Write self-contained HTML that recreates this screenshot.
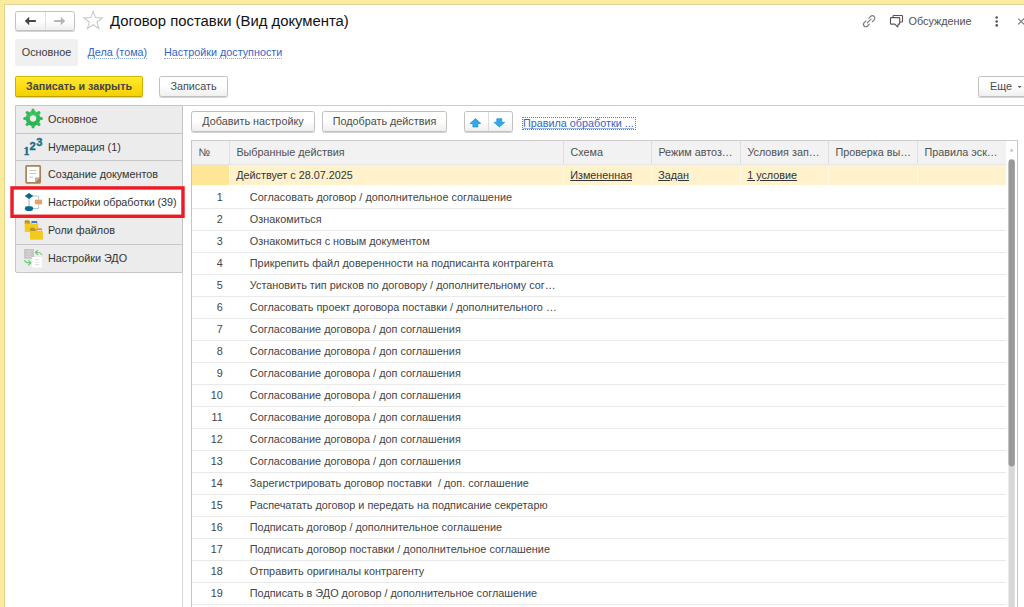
<!DOCTYPE html>
<html lang="ru">
<head>
<meta charset="utf-8">
<title>Договор поставки (Вид документа)</title>
<style>
*{box-sizing:border-box;margin:0;padding:0}
html,body{width:1024px;height:607px;overflow:hidden;background:#fff}
body{font-family:"Liberation Sans",sans-serif;font-size:10.8px;color:#333;position:relative}
.abs{position:absolute}
#ytop{left:0;top:0;width:1024px;height:4px;background:#fbeb9d}
#ytop2{left:0;top:4px;width:1024px;height:1px;background:#dcd39e}
#yleft2{left:4px;top:4px;width:1px;height:603px;background:#e2d68c}
#yleft{left:0;top:0;width:4px;height:607px;background:#fbeb9d}
.btn{position:absolute;border:1px solid #c0c0c0;border-radius:2.5px;background:linear-gradient(#fff 45%,#efefef);box-shadow:0 1px 0 rgba(0,0,0,.17);color:#4a4a4a;font-size:10.8px;text-align:center;white-space:nowrap}
#title{left:110px;top:11px;font-size:14.85px;line-height:20px;color:#111;white-space:nowrap}
.tabsel{left:15px;top:39px;width:63px;height:27px;background:#f0f0f0;border-radius:2px;text-align:center;line-height:27px;color:#3a3a3a}
.tlink{top:39px;height:27px;line-height:27px;color:#3465c4;white-space:nowrap}
.tlink span{border-bottom:1px dotted #86a6dd}
#btnsave{left:15px;top:76px;width:128px;height:21px;line-height:19px;font-weight:bold;font-size:10.7px;color:#444;background:linear-gradient(#ffe92e,#f5d000);border-color:#d4b800 #cdb000 #bfa200;border-radius:2px}
#btnwrite{left:159px;top:76px;width:69px;height:21px;line-height:19px}
#btnmore{left:978px;top:76px;width:60px;height:21px;line-height:19px;text-align:left;padding-left:11px}
/* left panel */
#lp{left:15px;top:105px;width:168px;height:168px;background:#ececec;border:1px solid #c6c6c6;border-radius:0 0 0 2px}
.li{position:absolute;left:0;width:166px;line-height:27px;padding-left:32px;color:#333;border-bottom:1px solid #c6c6c6;white-space:nowrap}
#sel{left:10.25px;top:186.6px;width:174.4px;height:31.5px;border:3.45px solid #ed1c24;background:#fff}
/* right */
#topline{left:183px;top:105px;width:841px;height:1px;background:#cdcdcd}
#vline{left:182px;top:273px;width:1px;height:334px;background:#d6d6d6}
#tbl{left:191px;top:140px;width:827px;height:480px;border:1px solid #c4c4c4;border-top-color:#cdcdcd;background:#fff}
.th{position:absolute;top:0;height:24px;line-height:22px;background:#f2f2f2;border-right:1px solid #dedede;border-bottom:1px solid #e6e6e6;padding-left:6.4px;color:#505050;white-space:nowrap;overflow:hidden}
.yc{position:absolute;top:24px;height:20px;line-height:20px;background:#fff2cc;border-right:1px solid #fff8e4;padding-left:6.2px;color:#333;white-space:nowrap}
.yc u{text-decoration:underline;text-underline-offset:1px}
.row{position:absolute;left:0;width:814px;height:22px;border-bottom:1px solid #e9e9e9;line-height:21px;white-space:nowrap;color:#444}
.row i{position:absolute;left:0;width:30.7px;text-align:right;font-style:normal}
.row b{position:absolute;left:57.8px;font-weight:normal;font-size:10.86px}
</style>
</head>
<body>
<div class="abs" id="ytop"></div>
<div class="abs" id="ytop2"></div>
<div class="abs" id="yleft"></div>
<div class="abs" id="yleft2"></div>

<!-- nav buttons -->
<div class="btn" style="left:15px;top:11px;width:60px;height:20px"></div>
<div class="abs" style="left:45px;top:12px;width:1px;height:18px;background:#e0e0e0"></div>
<svg class="abs" style="left:15px;top:11px" width="60" height="20" viewBox="0 0 60 20">
  <path d="M9.8 10 L14.2 5.8 V8.9 H20.8 V11.1 H14.2 V14.2 Z" fill="#444"/>
  <path d="M50.2 10 L45.8 5.8 V8.9 H39.2 V11.1 H45.8 V14.2 Z" fill="#b4b4b4"/>
</svg>
<!-- star -->
<svg class="abs" style="left:81.9px;top:9.3px" width="22.3" height="22.3" viewBox="0 0 21 21">
  <path d="M10.5 2.2 L12.7 8.1 L19.2 8.4 L14.1 12.3 L15.9 18.4 L10.5 14.8 L5.1 18.4 L6.9 12.3 L1.8 8.4 L8.3 8.1 Z" fill="#fff" stroke="#c2c5ca" stroke-width=".95" stroke-linejoin="miter"/>
</svg>
<div class="abs" id="title">Договор поставки (Вид документа)</div>

<!-- top right icons -->
<svg class="abs" style="left:861px;top:13px" width="16" height="16" viewBox="0 0 16 16" fill="none" stroke="#7a7a7a" stroke-width="1.15" stroke-linecap="round">
  <path d="M6.3 9.9 L10 6.2"/>
  <path d="M7.9 5.2 L9.7 3.4 a2.4 2.4 0 0 1 3.4 3.4 L11.3 8.6"/>
  <path d="M8.4 11.2 L6.6 13 a2.4 2.4 0 0 1 -3.4 -3.4 L5 7.8"/>
</svg>
<svg class="abs" style="left:888px;top:13px" width="17" height="16" viewBox="0 0 17 16" fill="none" stroke="#555" stroke-width="1.1" stroke-linejoin="round">
  <path d="M5 4 V3.2 a.7 .7 0 0 1 .7 -.7 H13.8 a.7 .7 0 0 1 .7 .7 V8.3 a.7 .7 0 0 1 -.7 .7 H12"/>
  <path d="M3.2 4.6 H11 a.7 .7 0 0 1 .7 .7 V10.4 a.7 .7 0 0 1 -.7 .7 H10.2 L9.8 14 L6.8 11.1 H3.2 a.7 .7 0 0 1 -.7 -.7 V5.3 a.7 .7 0 0 1 .7 -.7 Z" fill="#fff"/>
</svg>
<div class="abs" style="left:908.6px;top:14px;line-height:14px;color:#505050;white-space:nowrap">Обсуждение</div>
<svg class="abs" style="left:994px;top:15px" width="6" height="14" viewBox="0 0 6 14"><circle cx="2.7" cy="2.5" r="1.3" fill="#555"/><circle cx="2.7" cy="6.5" r="1.3" fill="#555"/><circle cx="2.7" cy="10.4" r="1.3" fill="#555"/></svg>
<svg class="abs" style="left:1016px;top:16px" width="8" height="10" viewBox="0 0 8 10"><path d="M2.2 2.6 L8 8.4 M8 2.6 L2.2 8.4" stroke="#777" stroke-width="1.1" fill="none"/></svg>

<!-- tabs -->
<div class="abs tabsel">Основное</div>
<div class="abs tlink" style="left:87.5px"><span>Дела (тома)</span></div>
<div class="abs tlink" style="left:164px"><span>Настройки доступности</span></div>

<!-- command bar -->
<div class="btn" id="btnsave">Записать и закрыть</div>
<div class="btn" id="btnwrite">Записать</div>
<div class="btn" id="btnmore">Еще</div>
<svg class="abs" style="left:1017px;top:85px" width="6" height="4" viewBox="0 0 6 4"><path d="M.6 .9 H4.6 L2.6 3.1 Z" fill="#555"/></svg>

<!-- left panel -->
<div class="abs" id="lp">
  <div class="li" style="top:0;height:28px">Основное</div>
  <div class="li" style="top:28px;height:27px">Нумерация (1)</div>
  <div class="li" style="top:55px;height:28px">Создание документов</div>
  <div class="li" style="top:83px;height:28px"></div>
  <div class="li" style="top:111px;height:28px">Роли файлов</div>
  <div class="li" style="top:139px;height:27px;border-bottom:none">Настройки ЭДО</div>
</div>
<svg class="abs" style="left:10px;top:186px" width="176" height="33" viewBox="0 0 176 33"><rect x="2.03" y="1.93" width="170.95" height="28.35" fill="#fff" stroke="#ed1c24" stroke-width="3.45"/></svg>
<div class="abs" style="left:48px;top:189px;line-height:27px;white-space:nowrap;color:#333;letter-spacing:-0.06px">Настройки обработки (39)</div>

<!-- ICONS -->
<!-- gear -->
<svg class="abs" style="left:22px;top:107px" width="22" height="23" viewBox="0 0 22 23">
  <defs><linearGradient id="gg" x1="0" y1="0" x2="0" y2="1"><stop offset="0" stop-color="#45c367"/><stop offset="1" stop-color="#22b14c"/></linearGradient></defs>
  <g transform="translate(11.05 11.5)" stroke="url(#gg)" stroke-width="3.2" stroke-linecap="round">
    <circle r="5.3" fill="none" stroke-width="4.3"/>
    <path d="M0 -6.5V-8.3 M0 6.5V8.3 M-6.5 0H-8.3 M6.5 0H8.3 M-4.6 -4.6L-5.87 -5.87 M4.6 4.6L5.87 5.87 M-4.6 4.6L-5.87 5.87 M4.6 -4.6L5.87 -5.87" stroke="#33ba59"/>
  </g>
</svg>
<!-- 123 -->
<svg class="abs" style="left:22px;top:135px" width="24" height="24" viewBox="0 0 24 24" font-family="'Liberation Serif',serif" font-weight="bold" fill="#156e8f" stroke="#156e8f" stroke-width=".35">
  <text x="1.4" y="20.3" font-size="12">1</text>
  <text x="7.5" y="15.3" font-size="11.2" font-family="'Liberation Sans',sans-serif">2</text>
  <text x="14.3" y="10.6" font-size="11.2" font-family="'Liberation Sans',sans-serif">3</text>
</svg>
<!-- doc -->
<svg class="abs" style="left:24px;top:164px" width="19" height="21" viewBox="0 0 19 21">
  <rect x="2.1" y="1.9" width="14.1" height="16.9" rx=".7" fill="#fff" stroke="#aa8253" stroke-width="1.7"/>
  <path d="M5.3 6.5H12.5 M5.3 9.6H12.5 M5.3 13.1H9" stroke="#c6c6c6" stroke-width="1"/>
  <path d="M11 18 L16 13 V18 Z" fill="#aa8253"/>
  <path d="M11 13.4 H15.2 L11 17.6 Z" fill="#a9aeb3"/>
</svg>
<!-- process -->
<svg class="abs" style="left:23px;top:191px" width="21" height="22" viewBox="0 0 21 22">
  <path d="M6 5 H15.7 V8.5 M15.7 13.3 V17.5 H6" fill="none" stroke="#a9ccd2" stroke-width="1"/>
  <path d="M6 5 V17" stroke="#b7d5da" stroke-width="1.6"/>
  <path d="M1.7 5 L6 2 L10.3 5 L6 8 Z" fill="#0b6a8c"/>
  <rect x="1.8" y="15.2" width="8.4" height="4.8" rx="2.4" fill="#0b6a8c"/>
  <rect x="11.8" y="8.6" width="7.2" height="4.7" fill="#e9a263"/>
</svg>
<!-- folders -->
<svg class="abs" style="left:24px;top:219px" width="20" height="22" viewBox="0 0 20 22">
  <rect x="7.5" y="2" width="5.7" height="3.6" rx=".6" fill="#3b7ad6"/><rect x="8.2" y="4" width="4.3" height="1.8" fill="#fff"/>
  <path d="M.7 2 a.8 .8 0 0 1 .8 -.8 H4.8 L6.3 3.2 V5 H.7 Z" fill="#b5981f"/>
  <path d="M.7 4.6 H13.4 a.7 .7 0 0 1 .7 .7 V12.2 a.7 .7 0 0 1 -.7 .7 H1.4 a.7 .7 0 0 1 -.7 -.7 Z" fill="#f1cb1f"/>
  <rect x="12.5" y="9.3" width="5.4" height="3.4" rx=".6" fill="#f08b3e"/><rect x="13.1" y="11.2" width="4.2" height="1.8" fill="#fff"/>
  <path d="M6 9.5 a.8 .8 0 0 1 .8 -.8 H10.2 L11.7 10.8 V12.6 H6 Z" fill="#b5981f"/>
  <path d="M6 12.1 H18.2 a.7 .7 0 0 1 .7 .7 V20.1 a.7 .7 0 0 1 -.7 .7 H6.7 a.7 .7 0 0 1 -.7 -.7 Z" fill="#f1cb1f"/>
</svg>
<!-- edo -->
<svg class="abs" style="left:23px;top:248px" width="21" height="21" viewBox="0 0 21 21">
  <rect x="1.1" y="1" width="9.8" height="9.8" fill="#c6c6c6"/>
  <path d="M3.2 3.5H8.2 M3.2 6H8.2 M3.2 8.4H8.2" stroke="#d6d6d6" stroke-width="1"/>
  <rect x="8.9" y="9" width="9.9" height="10.5" fill="#fff"/>
  <path d="M11.8 11.7H16.2 M11.8 14.3H16.2 M11.8 16.6H16.2" stroke="#dedede" stroke-width="1"/>
  <path d="M18.8 6.6 C17.6 4.6 15.5 4 12.6 4.3 M14.6 2.3 L12.2 4.4 L14.8 6.5" fill="none" stroke="#62cb70" stroke-width="1.05" stroke-linecap="round" stroke-linejoin="round"/>
  <path d="M1.4 12.6 C2.7 14.5 4.6 15.2 7.6 14.9 M5.6 12.6 L8 14.9 L5.4 17" fill="none" stroke="#62cb70" stroke-width="1.05" stroke-linecap="round" stroke-linejoin="round"/>
</svg>

<div class="abs" id="topline"></div>
<div class="abs" id="vline"></div>

<!-- table toolbar -->
<div class="btn" style="left:191px;top:111px;width:124px;height:21px;line-height:19px">Добавить настройку</div>
<div class="btn" style="left:322px;top:111px;width:125px;height:21px;line-height:19px">Подобрать действия</div>
<div class="btn" style="left:464px;top:111px;width:49px;height:21px"></div>
<div class="abs" style="left:488px;top:112px;width:1px;height:19px;background:#dcdcdc"></div>
<svg class="abs" style="left:464px;top:111px" width="49" height="21" viewBox="0 0 49 21">
  <path d="M11.4 7.6 L16.8 12.5 H13.9 V16 H8.9 V12.5 H6 Z" fill="#2fa9ea" stroke="#1d8fd2" stroke-width=".7" stroke-linejoin="round"/>
  <path d="M35.3 16 L40.7 11.3 H37.8 V7.7 H32.8 V11.3 H29.9 Z" fill="#2fa9ea" stroke="#1d8fd2" stroke-width=".7" stroke-linejoin="round"/>
</svg>
<div class="abs" style="left:522px;top:117px;height:13px;line-height:10px;border:1px dotted #7c7c7c;padding:0 1px 0 0;color:#3465c4;white-space:nowrap"><span style="border-bottom:1px solid #9db7e6;display:inline-block;height:11px">Правила обработки ...</span></div>

<!-- table -->
<div class="abs" id="tbl">
  <div class="th" style="left:0;width:38px">№</div>
  <div class="th" style="left:38px;width:334px">Выбранные действия</div>
  <div class="th" style="left:372px;width:88px">Схема</div>
  <div class="th" style="left:460px;width:89px">Режим автоз…</div>
  <div class="th" style="left:549px;width:88px">Условия зап…</div>
  <div class="th" style="left:637px;width:89px">Проверка вы…</div>
  <div class="th" style="left:726px;width:88px;border-right:none">Правила эск…</div>

  <div class="yc" style="left:0;width:38px;background:#ffe596"></div>
  <div class="yc" style="left:38px;width:334px">Действует с 28.07.2025</div>
  <div class="yc" style="left:372px;width:88px"><u>Измененная</u></div>
  <div class="yc" style="left:460px;width:89px"><u>Задан</u></div>
  <div class="yc" style="left:549px;width:88px"><u>1 условие</u></div>
  <div class="yc" style="left:637px;width:89px"></div>
  <div class="yc" style="left:726px;width:88px;border-right:none"></div>

  <div class="row" style="top:46px"><i>1</i><b>Согласовать договор / дополнительное соглашение</b></div>
  <div class="row" style="top:68px"><i>2</i><b>Ознакомиться</b></div>
  <div class="row" style="top:90px"><i>3</i><b>Ознакомиться с новым документом</b></div>
  <div class="row" style="top:112px"><i>4</i><b>Прикрепить файл доверенности на подписанта контрагента</b></div>
  <div class="row" style="top:134px"><i>5</i><b>Установить тип рисков по договору / дополнительному сог…</b></div>
  <div class="row" style="top:156px"><i>6</i><b>Согласовать проект договора поставки / дополнительного …</b></div>
  <div class="row" style="top:178px"><i>7</i><b>Согласование договора / доп соглашения</b></div>
  <div class="row" style="top:200px"><i>8</i><b>Согласование договора / доп соглашения</b></div>
  <div class="row" style="top:222px"><i>9</i><b>Согласование договора / доп соглашения</b></div>
  <div class="row" style="top:244px"><i>10</i><b>Согласование договора / доп соглашения</b></div>
  <div class="row" style="top:266px"><i>11</i><b>Согласование договора / доп соглашения</b></div>
  <div class="row" style="top:288px"><i>12</i><b>Согласование договора / доп соглашения</b></div>
  <div class="row" style="top:310px"><i>13</i><b>Согласование договора / доп соглашения</b></div>
  <div class="row" style="top:332px"><i>14</i><b>Зарегистрировать договор поставки&nbsp; / доп. соглашение</b></div>
  <div class="row" style="top:354px"><i>15</i><b>Распечатать договор и передать на подписание секретарю</b></div>
  <div class="row" style="top:376px"><i>16</i><b>Подписать договор / дополнительное соглашение</b></div>
  <div class="row" style="top:398px"><i>17</i><b>Подписать договор поставки / дополнительное соглашение</b></div>
  <div class="row" style="top:420px"><i>18</i><b>Отправить оригиналы контрагенту</b></div>
  <div class="row" style="top:442px"><i>19</i><b>Подписать в ЭДО договор / дополнительное соглашение</b></div>

  <!-- scrollbar -->
  <svg class="abs" style="left:816px;top:18px" width="8" height="462" viewBox="0 0 8 462"><rect x=".5" y="4" width="6.3" height="458" fill="#d8d8d8"/><rect x=".5" y=".3" width="6.3" height="307.2" rx="3.15" fill="#999"/></svg>
  <svg class="abs" style="left:816px;top:6px" width="7" height="6" viewBox="0 0 7 6"><path d="M3.6 1.2 L5.6 4.4 H1.6 Z" fill="#c4c4c4"/></svg>
</div>
</body>
</html>
